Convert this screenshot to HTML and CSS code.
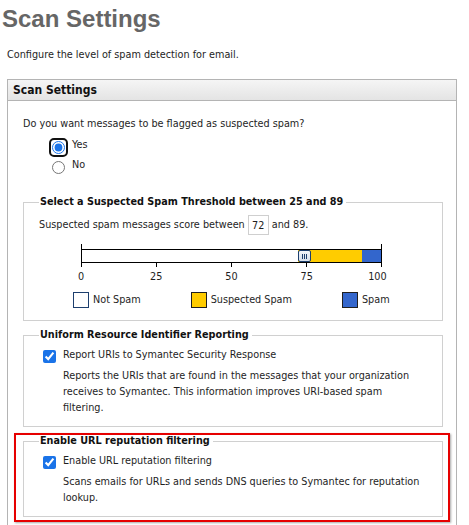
FILE: index.html
```html
<!DOCTYPE html>
<html lang="en">
<head>
<meta charset="utf-8">
<title>Scan Settings</title>
<link rel="stylesheet" href="styles.css">
</head>
<body>
<h1 class="title">Scan Settings</h1>
<p class="intro">Configure the level of spam detection for email.</p>

<div class="panel">
  <div class="panel-head">Scan Settings</div>
  <div class="panel-body">
    <p class="question">Do you want messages to be flagged as suspected spam?</p>
    <div class="radios">
      <label class="opt"><span class="ring focused"><input type="radio" name="flag" class="radio" checked></span><span>Yes</span></label>
      <label class="opt"><span class="ring"><input type="radio" name="flag" class="radio"></span><span>No</span></label>
    </div>

    <fieldset class="group threshold">
      <legend>Select a Suspected Spam Threshold between 25 and 89</legend>
      <div class="score-row">
        <span>Suspected spam messages score between</span>
        <input class="score" type="text" value="72">
        <span>and 89.</span>
      </div>
      <div class="scale">
        <div class="bar">
          <div class="fill suspect" style="left:72%;width:21.5%"></div>
          <div class="fill spam" style="left:93.5%;width:6.5%"></div>
        </div>
        <div class="ticks">
          <i class="tick tall" style="left:0%"></i>
          <i class="tick" style="left:25%"></i>
          <i class="tick" style="left:50%"></i>
          <i class="tick" style="left:75%"></i>
          <i class="tick tall" style="left:100%"></i>
        </div>
        <div class="thumb" style="left:72%"><b></b><b></b><b></b></div>
        <div class="labels">
          <span style="left:0%">0</span>
          <span style="left:25%">25</span>
          <span style="left:50%">50</span>
          <span style="left:75%">75</span>
          <span class="end" style="left:100%">100</span>
        </div>
      </div>
      <div class="key">
        <span class="key-item"><i class="swatch none"></i>Not Spam</span>
        <span class="key-item"><i class="swatch suspect"></i>Suspected Spam</span>
        <span class="key-item"><i class="swatch spam"></i>Spam</span>
      </div>
    </fieldset>

    <fieldset class="group">
      <legend>Uniform Resource Identifier Reporting</legend>
      <label class="check"><input type="checkbox" checked><span>Report URIs to Symantec Security Response</span></label>
      <p class="help">Reports the URIs that are found in the messages that your organization<br>receives to Symantec. This information improves URI-based spam<br>filtering.</p>
    </fieldset>

    <div class="highlight">
      <fieldset class="group">
        <legend>Enable URL reputation filtering</legend>
        <label class="check"><input type="checkbox" checked><span>Enable URL reputation filtering</span></label>
        <p class="help">Scans emails for URLs and sends DNS queries to Symantec for reputation<br>lookup.</p>
      </fieldset>
    </div>
  </div>
</div>
</body>
</html>
```

FILE: styles.css
```css
html, body {
  margin: 0;
  padding: 0;
  background: #fff;
}

body {
  font-family: "DejaVu Sans Condensed", "DejaVu Sans", sans-serif;
  font-stretch: condensed;
  font-size: 10.75px;
  line-height: 14px;
  color: #1e1e1e;
}

.title {
  margin: 5px 0 0 2px;
  font-family: "Liberation Sans", Arial, sans-serif;
  font-stretch: normal;
  font-size: 24px;
  line-height: 28px;
  font-weight: bold;
  color: #666;
}

.intro {
  margin: 15px 0 0 7px;
}

.panel {
  margin: 17px 0 0 7px;
  width: 450px;
  box-sizing: border-box;
  border: 1px solid #b4b4b4;
}

.panel-head {
  height: 20px;
  line-height: 20px;
  padding-left: 5px;
  font-size: 12px;
  font-weight: bold;
  color: #111;
  background: linear-gradient(#f5f5f5, #e4e4e4);
  border-bottom: 1px solid #b4b4b4;
}

.panel-body {
  padding: 16px 13px 10px 15px;
}

.question {
  margin: 0;
}

.radios {
  margin-top: 7px;
  display: flex;
  flex-direction: column;
  gap: 6px;
}

.opt {
  display: flex;
  align-items: flex-start;
  gap: 4px;
  padding-left: 26px;
  height: 14px;
}

.ring {
  display: flex;
  padding: 1px;
  border: 2px solid transparent;
  border-radius: 5px;
}

.ring.focused {
  border-color: #111;
}

.radio {
  margin: 0;
  width: 13px;
  height: 13px;
  accent-color: #1a73e8;
}

.group {
  margin: 0;
  padding: 0 10px 10px 15px;
  border: 1px solid #d0d0d0;
  min-inline-size: 0;
}

.group legend {
  padding: 0 3px 0 1px;
  font-weight: bold;
  color: #111;
}

.threshold {
  margin-top: 23px;
  padding-bottom: 12px;
}

.group + .group,
.group + .highlight {
  margin-top: 7px;
}

.score-row {
  margin-top: 6px;
  display: flex;
  align-items: center;
  gap: 3px;
  height: 20px;
}

.score {
  box-sizing: border-box;
  width: 21px;
  height: 20px;
  margin: 0;
  padding: 0;
  border: 1px solid #cfcfcf;
  font: inherit;
  color: #1e1e1e;
  text-align: center;
}

.scale {
  position: relative;
  margin: 9px 0 0 42px;
  width: 301px;
  height: 39px;
}

.bar {
  position: absolute;
  left: 0;
  right: 0;
  top: 5px;
  height: 12px;
  border-top: 1px solid #000;
  border-bottom: 1px solid #000;
  background: #fff;
}

.fill {
  position: absolute;
  top: 0;
  bottom: 0;
}

.fill.suspect { background: #ffcc00; }
.fill.spam { background: #3366cc; }

.ticks {
  position: absolute;
  left: 0;
  right: 1px;
  top: 0;
  height: 23px;
}

.tick {
  position: absolute;
  top: 18px;
  width: 1px;
  height: 5px;
  background: #000;
}

.tick.tall {
  top: 0;
  height: 23px;
}

.thumb {
  position: absolute;
  top: 6px;
  width: 13px;
  height: 12px;
  box-sizing: border-box;
  border: 1px solid #1d3f6e;
  border-radius: 2px;
  background: linear-gradient(#f3f6fa, #d6dfea);
  display: flex;
  align-items: center;
  justify-content: center;
  gap: 1px;
}

.thumb b {
  width: 1px;
  height: 5px;
  background: #1d3f6e;
}

.labels span {
  position: absolute;
  top: 26px;
  transform: translateX(-50%);
}

.labels span.end {
  transform: translateX(-75%);
}

.key {
  margin: 9px 0 0 34px;
  display: flex;
  gap: 50px;
}

.key-item {
  display: flex;
  align-items: center;
  gap: 4px;
  height: 16px;
}

.swatch {
  box-sizing: border-box;
  width: 16px;
  height: 16px;
  border: 1px solid #1f1f1f;
}

.swatch.none { border-color: #1d3f6e; background: #fff; }
.swatch.suspect { background: #ffcc00; }
.swatch.spam { background: #3366cc; }

.check {
  display: flex;
  align-items: flex-start;
  gap: 7px;
  margin: 6px 0 0 4px;
  height: 14px;
}

.check input {
  margin: 2px 0 0 0;
  width: 13px;
  height: 13px;
  accent-color: #1a73e8;
}

.help {
  margin: 6px 0 0 24px;
  line-height: 16px;
}

.highlight {
  position: relative;
}

.highlight::after {
  content: "";
  position: absolute;
  top: -1px;
  left: -9px;
  right: -7px;
  bottom: -5px;
  border: 2px solid #e60000;
  box-shadow: 1px 1px 2px rgba(0, 0, 0, 0.35);
  pointer-events: none;
}
```
